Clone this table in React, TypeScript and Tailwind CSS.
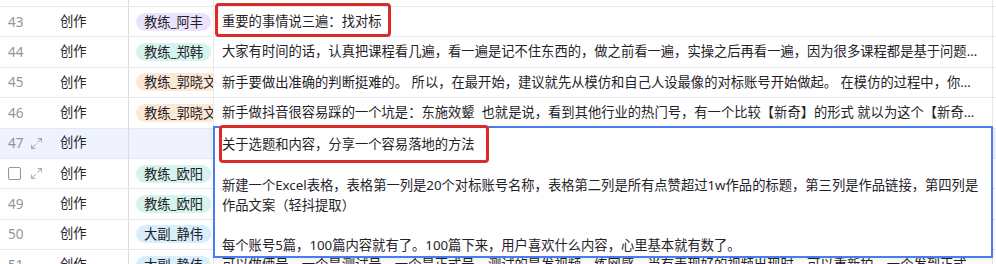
import React from 'react';
import { Maximize2 } from 'lucide-react';

type Row = {
  n: string;
  tag?: string;
  tagBg?: string;
  text?: string;
  active?: boolean;
  hover?: boolean;
};

const rows: Row[] = [
  { n: '43', tag: '教练_阿丰', tagBg: 'bg-[#ebe3fc]', text: '重要的事情说三遍：找对标' },
  {
    n: '44',
    tag: '教练_郑韩',
    tagBg: 'bg-[#d6f3ee]',
    text: '大家有时间的话，认真把课程看几遍，看一遍是记不住东西的，做之前看一遍，实操之后再看一遍，因为很多课程都是基于问题来讲的，每一遍都会有新的收获。',
  },
  {
    n: '45',
    tag: '教练_郭晓文',
    tagBg: 'bg-[#fce8d3]',
    text: '新手要做出准确的判断挺难的。 所以，在最开始，建议就先从模仿和自己人设最像的对标账号开始做起。 在模仿的过程中，你会慢慢找到自己的感觉。',
  },
  {
    n: '46',
    tag: '教练_郭晓文',
    tagBg: 'bg-[#fce8d3]',
    text: '新手做抖音很容易踩的一个坑是：东施效颦  也就是说，看到其他行业的热门号，有一个比较【新奇】的形式 就以为这个【新奇】的形式适合自己。',
  },
  { n: '47', active: true },
  { n: '48', hover: true, tag: '教练_欧阳', tagBg: 'bg-[#d6f3ee]', text: '' },
  { n: '49', tag: '教练_欧阳', tagBg: 'bg-[#d6f3ee]', text: '' },
  { n: '50', tag: '大副_静伟', tagBg: 'bg-[#d8eefb]', text: '' },
  {
    n: '51',
    tag: '大副_静伟',
    tagBg: 'bg-[#d8eefb]',
    text: '可以做俩号，一个是测试号，一个是正式号，测试的是发视频，练网感，当有表现好的视频出现时，可以重新拍，一个发到正式号。',
  },
];

function TableRow({ r }: { r: Row }) {
  return (
    <div
      className={`flex h-[30.4px] shrink-0 border-b border-[#e6e8eb] ${r.active ? 'bg-[#eef3fe]' : 'bg-white'}`}
    >
      <div className="flex w-[60px] items-center pl-2">
        {r.hover ? (
          <span className="block h-[13px] w-[13px] rounded-[2px] border border-[#8f959e] bg-white" />
        ) : (
          <span className="w-[22px] text-[13.5px] text-[#8f959e]">{r.n}</span>
        )}
        {(r.active || r.hover) && (
          <Maximize2
            size={13}
            strokeWidth={1.6}
            className={`text-[#8f959e] ${r.hover ? 'ml-[9px]' : 'ml-0'}`}
          />
        )}
      </div>
      <div className="flex w-[69px] items-center border-r border-[#d9dce1] text-[13.3px] text-[#1f2329]">
        创作
      </div>
      <div className="flex w-[85px] items-center overflow-hidden border-r border-[#e6e8eb] pl-[7px]">
        {r.tag && (
          <span
            className={`shrink-0 whitespace-nowrap rounded-full px-2 text-[13.3px] leading-[18px] text-[#1f2329] ${r.tagBg}`}
          >
            {r.tag}
          </span>
        )}
      </div>
      <div className="flex w-[779px] items-center overflow-hidden border-r border-[#e6e8eb] px-2">
        <span className="block overflow-hidden text-ellipsis whitespace-pre text-[13.3px] text-[#1f2329]">
          {r.text}
        </span>
      </div>
      <div className="flex-1" />
    </div>
  );
}

export default function App() {
  return (
    <div className="relative h-[264px] w-[996px] overflow-hidden bg-white font-['Noto_Sans','Noto_Sans_CJK_SC',sans-serif]">
      <div className="flex flex-col">
        <div className="flex h-[7px] shrink-0 border-b border-[#e6e8eb]">
          <div className="w-[60px]" />
          <div className="w-[69px] border-r border-[#d9dce1]" />
          <div className="w-[85px] border-r border-[#e6e8eb]" />
          <div className="w-[779px] border-r border-[#e6e8eb]" />
          <div className="flex-1" />
        </div>
        {rows.map((r) => (
          <TableRow key={r.n} r={r} />
        ))}
      </div>

      {/* expanded cell editor */}
      <div className="absolute left-[213px] top-[126px] h-[132px] w-[780px] overflow-hidden border-2 border-[#4a7cf0] bg-white pl-[7px] pt-[6px] text-[13.3px] leading-[20.3px] text-[#1f2329] shadow-[0_2px_6px_rgba(0,0,0,0.08)]">
        <p>关于选题和内容，分享一个容易落地的方法</p>
        <p>&nbsp;</p>
        <p>新建一个Excel表格，表格第一列是20个对标账号名称，表格第二列是所有点赞超过1w作品的标题，第三列是作品链接，第四列是</p>
        <p>作品文案（轻抖提取）</p>
        <p>&nbsp;</p>
        <p>每个账号5篇，100篇内容就有了。100篇下来，用户喜欢什么内容，心里基本就有数了。</p>
      </div>

      {/* red annotation boxes */}
      <div className="pointer-events-none absolute left-[215px] top-[3px] h-[34px] w-[176px] rounded-[4px] border-[3px] border-[#dc2a2a]" />
      <div className="pointer-events-none absolute left-[219px] top-[125px] h-[38px] w-[270px] rounded-[4px] border-[3px] border-[#dc2a2a]" />
    </div>
  );
}
